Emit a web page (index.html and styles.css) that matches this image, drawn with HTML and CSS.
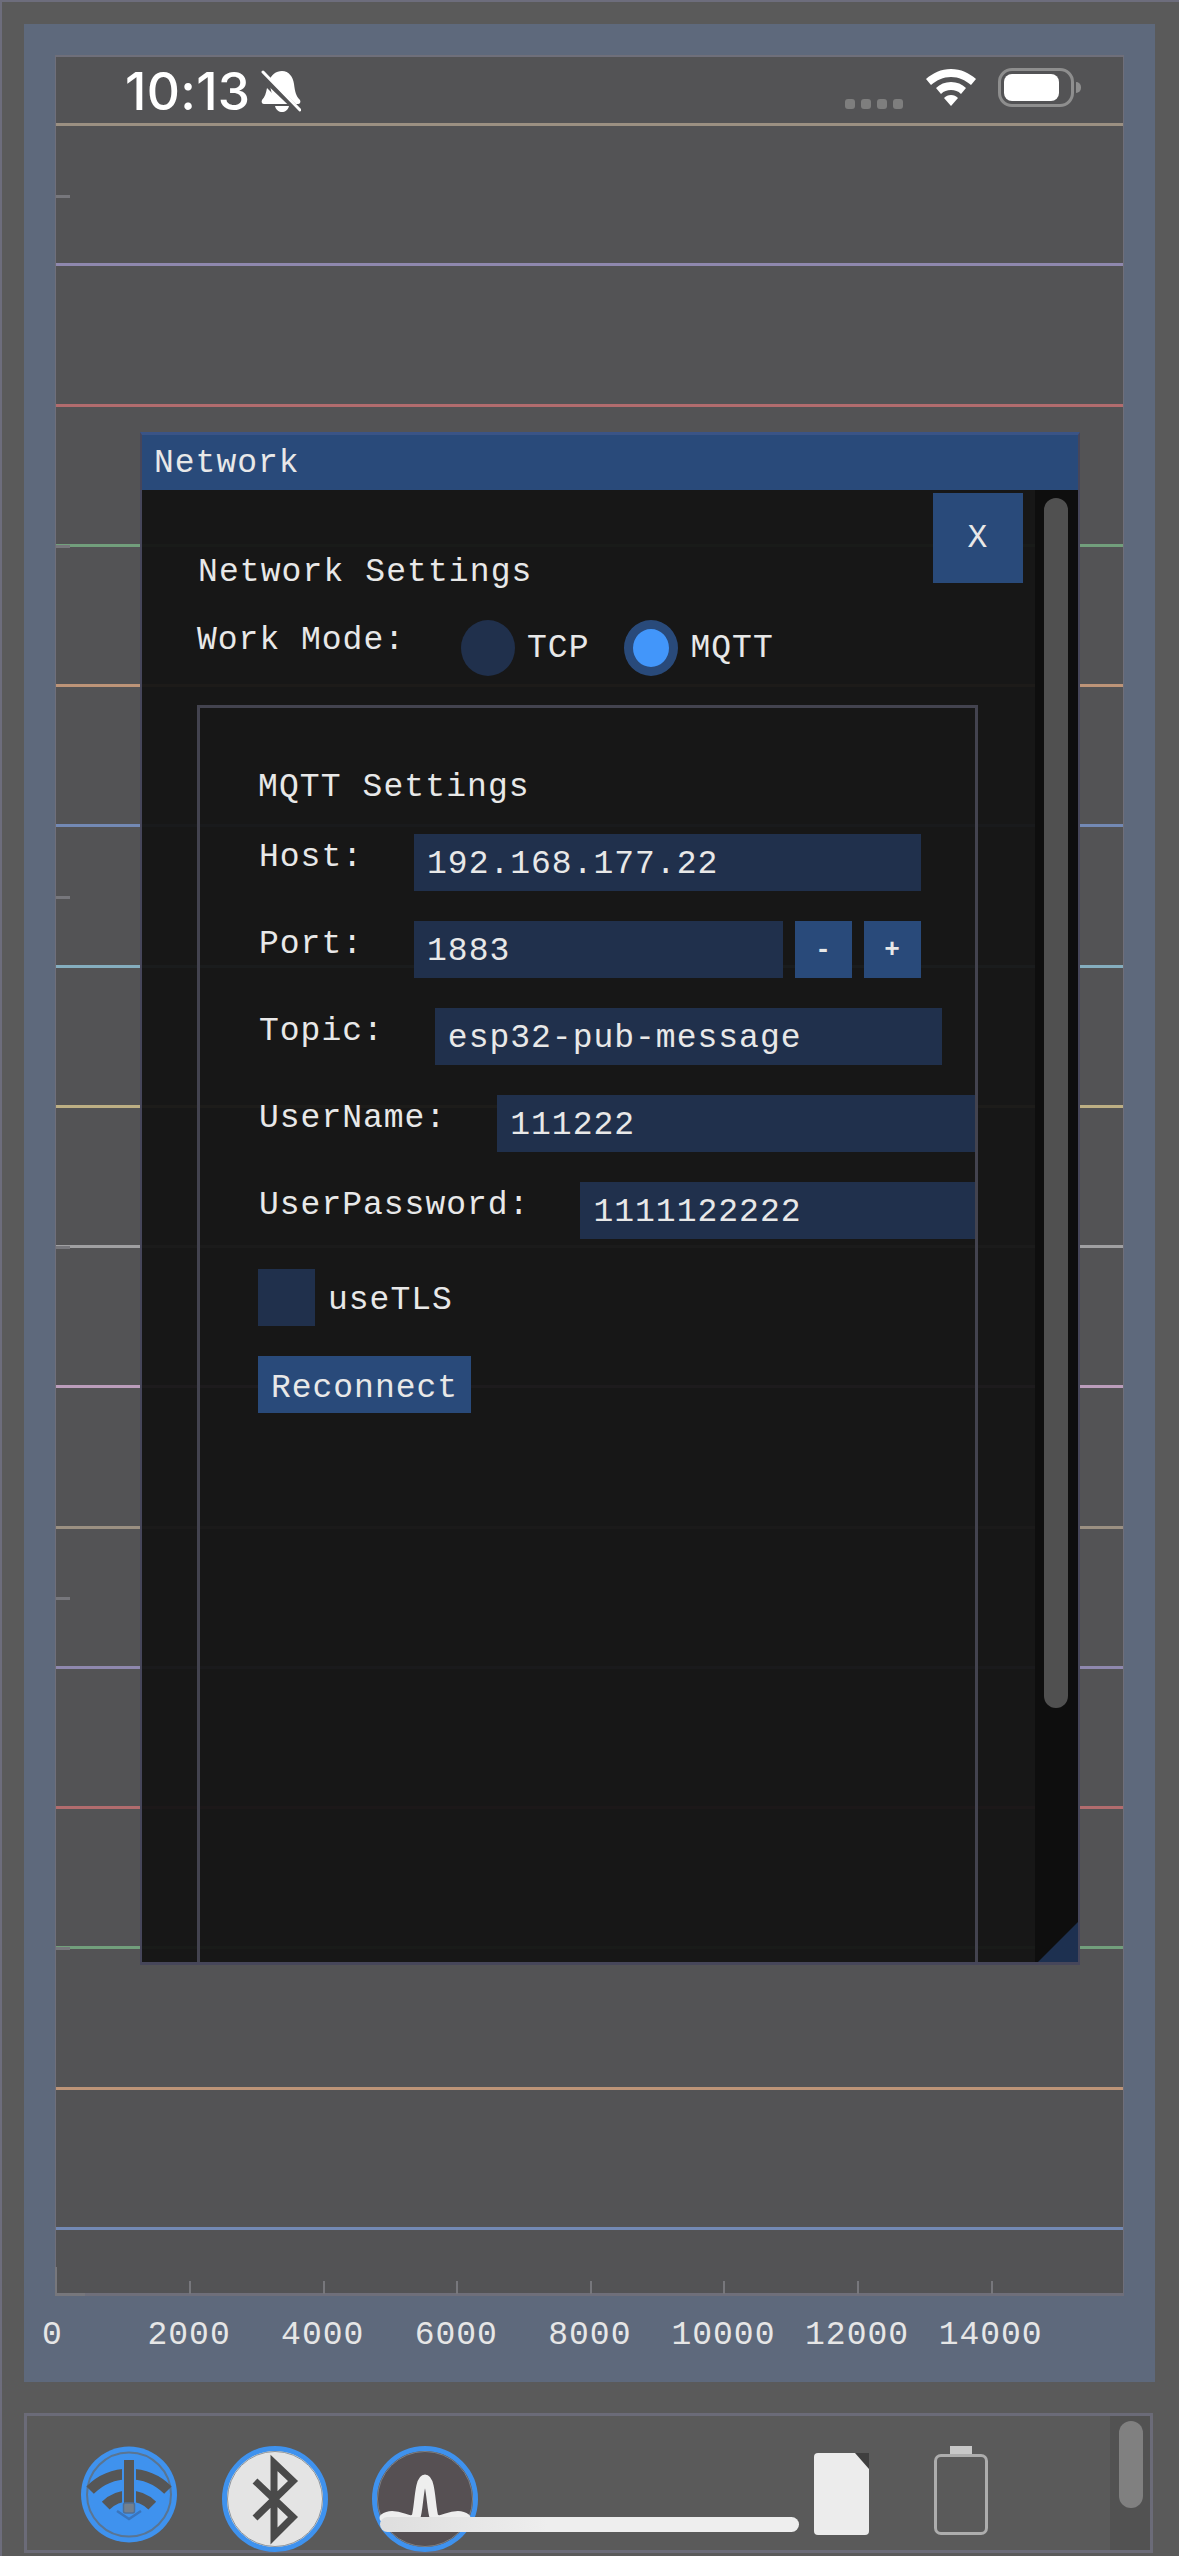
FILE: index.html
```html
<!DOCTYPE html>
<html lang="en">
<head>
  <meta charset="UTF-8">
  <meta name="viewport" content="width=device-width, initial-scale=1.0">
  <title>Network</title>
  <link rel="stylesheet" href="styles.css">
</head>
<body>
  <div class="app">
    <section class="plot-frame">
      <div class="plot">
        <div class="status-bar">
          <div class="status-left">
            <span class="clock">10:13</span>
            <svg class="bell" viewBox="0 0 40 42">
              <path fill="#fff" d="M21 1c7 0 11 6 12 13 1 8 2 12 6 16 1 2 0 4-2 4H13L8 11C10 5 15 1 21 1z"/>
              <path fill="#fff" d="M6 18l16 16H3c-2 0-3-2-2-4 3-3 4-7 5-12z"/>
              <path fill="#fff" d="M14 36h14c-1 4-4 6-7 6s-6-2-7-6z"/>
              <path stroke="#535355" stroke-width="6" d="M-1 4l40 38"/>
              <path stroke="#fff" stroke-width="3" stroke-linecap="round" d="M2 2l37 38"/>
            </svg>
          </div>
          <div class="status-right">
            <div class="signal-dots"><i></i><i></i><i></i><i></i></div>
            <svg class="wifi" viewBox="0 0 50 37">
              <path fill="#fff" d="M25 0c10 0 18 4 25 10l-5 6C39 11 33 8 25 8S11 11 5 16l-5-6C7 4 15 0 25 0z"/>
              <path fill="#fff" d="M25 13c6 0 11 2 15 6l-5 6c-3-3-6-4-10-4s-7 1-10 4l-5-6c4-4 9-6 15-6z"/>
              <path fill="#fff" d="M25 26c3 0 5 1 7 3l-7 8-7-8c2-2 4-3 7-3z"/>
            </svg>
            <div class="battery"><div class="battery-level"></div></div>
            <div class="battery-cap"></div>
          </div>
        </div>

        <div class="series">
          <div class="line c1"></div>
          <div class="line c2"></div>
          <div class="line c3"></div>
          <div class="line c4"></div>
          <div class="line c5"></div>
          <div class="line c6"></div>
          <div class="line c7"></div>
          <div class="line c8"></div>
          <div class="line c9"></div>
          <div class="line c10"></div>
          <div class="line c1"></div>
          <div class="line c2"></div>
          <div class="line c3"></div>
          <div class="line c4"></div>
          <div class="line c5"></div>
          <div class="line c6"></div>
        </div>

        <div class="y-ticks">
          <i></i><i></i><i></i><i></i><i></i><i></i>
        </div>
        <div class="x-ticks">
          <i></i><i></i><i></i><i></i><i></i><i></i><i></i>
        </div>
        <div class="origin"></div>

        <div class="window">
          <div class="window-title">Network</div>
          <div class="window-body">
            <div class="window-content">
              <div class="head-row">
                <h2 class="heading">Network Settings</h2>
                <button class="btn close-btn">X</button>
              </div>
              <div class="mode-row">
                <span class="label mode-label">Work Mode:</span>
                <span class="radio"></span>
                <span class="opt-text">TCP</span>
                <span class="radio checked"></span>
                <span class="opt-text">MQTT</span>
              </div>
              <div class="child">
                <h3 class="heading child-heading">MQTT Settings</h3>
                <div class="field">
                  <label class="label">Host:</label>
                  <input class="input" type="text" value="192.168.177.22">
                </div>
                <div class="field">
                  <label class="label">Port:</label>
                  <input class="input input-port" type="text" value="1883">
                  <button class="btn step-btn">-</button>
                  <button class="btn step-btn">+</button>
                </div>
                <div class="field">
                  <label class="label">Topic:</label>
                  <input class="input" type="text" value="esp32-pub-message">
                </div>
                <div class="field">
                  <label class="label">UserName:</label>
                  <input class="input" type="text" value="111222">
                </div>
                <div class="field">
                  <label class="label">UserPassword:</label>
                  <input class="input" type="text" value="1111122222">
                </div>
                <div class="field check-row">
                  <span class="checkbox"></span>
                  <span class="opt-text">useTLS</span>
                </div>
                <div class="field">
                  <button class="btn reconnect-btn">Reconnect</button>
                </div>
              </div>
            </div>
            <div class="scrollbar"><div class="scroll-grab"></div></div>
          </div>
          <div class="resize-grip"></div>
        </div>
      </div>

      <div class="x-labels">
        <span>0</span>
        <span>2000</span>
        <span>4000</span>
        <span>6000</span>
        <span>8000</span>
        <span>10000</span>
        <span>12000</span>
        <span>14000</span>
      </div>
    </section>

    <section class="tool-panel">
      <svg class="tool-icon icon-wifi" viewBox="0 0 96 97">
        <circle cx="48" cy="48.5" r="48" fill="#3f92ee"/>
        <circle cx="48" cy="48.5" r="42" fill="none" stroke="#5a7592" stroke-width="2"/>
        <path fill="none" stroke="#565656" stroke-width="10.5" d="M9.1 44.1A55 55 0 0 1 86.9 44.1"/>
        <path fill="none" stroke="#565656" stroke-width="11" d="M24.7 59.7A33 33 0 0 1 71.3 59.7"/>
        <path fill="none" stroke="#3a75bc" stroke-width="2.5" d="M36 65l12 8 12-8"/>
        <rect x="42" y="13" width="12" height="45" fill="#565656" stroke="#3f92ee" stroke-width="2"/>
        <rect x="42.5" y="57" width="11" height="10" rx="2" fill="#74808e" stroke="#4f6f96" stroke-width="1.5"/>
      </svg>
      <svg class="tool-icon icon-bt" viewBox="0 0 106 106">
        <circle cx="53" cy="53" r="50.5" fill="#e4e4e4" stroke="#3f92ee" stroke-width="5"/>
        <circle cx="53" cy="53" r="47.5" fill="none" stroke="#8c949c" stroke-width="1"/>
        <path fill="none" stroke="#4a4a4a" stroke-width="7" d="M33 35l38 36-19 19V17l19 18-38 37"/>
      </svg>
      <svg class="tool-icon icon-signal" viewBox="0 0 106 106">
        <circle cx="53" cy="53" r="50.5" fill="#565053" stroke="#3f92ee" stroke-width="5"/>
        <circle cx="53" cy="53" r="47.5" fill="none" stroke="#7d8186" stroke-width="1"/>
        <path fill="none" stroke="#eeeeee" stroke-width="9" stroke-linecap="round" d="M12 72c5-4 12-3 20 0 5 2 9 3 12-1 3-8 3-38 9-38s6 30 9 38c3 4 7 3 12 1 8-3 15-4 20 0"/>
      </svg>
      <svg class="tool-icon icon-sd" viewBox="0 0 55 82">
        <rect width="55" height="82" rx="4" fill="#ececec"/>
        <path fill="#3f3f3f" d="M41 0h14v16z"/>
      </svg>
      <div class="tool-icon icon-cell">
        <div class="cell-cap"></div>
        <div class="cell-body"></div>
      </div>
      <div class="panel-scroll"><div class="panel-grab"></div></div>
    </section>

    <div class="home-bar"></div>
  </div>
</body>
</html>
```

FILE: styles.css
```css
* {
  box-sizing: border-box;
}

html, body {
  margin: 0;
  padding: 0;
}

body {
  background: #5a5a5a;
  font-family: "Liberation Mono", monospace;
  color: #e8e8e8;
}

.app {
  position: relative;
  height: 2556px;
  padding: 22px 24px 3px 22px;
  border-top: 2px solid #6d6d7c;
  border-left: 2px solid #6d6d7c;
  overflow: hidden;
}

.plot-frame {
  height: 2358px;
  padding: 31px 31px 0 31px;
  background: #5e697c;
}

.plot {
  position: relative;
  height: 2241px;
  background: #535355;
  border: 1px solid #6f6f7a;
  border-top-width: 2px;
  border-bottom-width: 3px;
}

/* status bar */
.status-bar {
  display: flex;
  justify-content: space-between;
  height: 66px;
  padding: 9px 42px 0 69px;
}

.status-left {
  display: flex;
  align-items: flex-start;
  gap: 11px;
}

.clock {
  font-family: Inter, sans-serif;
  font-size: 51.5px;
  line-height: 50px;
  font-weight: 500;
  letter-spacing: 0.3px;
  color: #fff;
}

.bell {
  width: 40px;
  height: 42px;
  margin-top: 4px;
}

.status-right {
  display: flex;
  align-items: flex-start;
  padding-top: 3px;
}

.signal-dots {
  display: flex;
  gap: 6px;
  margin: 30px 23px 0 0;
}

.signal-dots i {
  width: 10px;
  height: 10px;
  border-radius: 3px;
  background: #7e7e7e;
}

.wifi {
  width: 50px;
  height: 37px;
}

.battery {
  width: 76px;
  height: 39px;
  margin: -1px 0 0 22px;
  padding: 3px;
  border: 3px solid #8e8e8e;
  border-radius: 14px;
}

.battery-level {
  width: 55px;
  height: 27px;
  background: #fff;
  border-radius: 8px;
}

.battery-cap {
  width: 5px;
  height: 11px;
  margin: 13px 0 0 2px;
  background: #8e8e8e;
  border-radius: 0 5px 5px 0;
}

/* plot lines */
.series {
  display: flex;
  flex-direction: column;
  justify-content: space-between;
  height: 2107px;
}

.line {
  height: 3px;
}

.c1 { background: #9b9082; }
.c2 { background: #8f88ae; }
.c3 { background: #b26c6e; }
.c4 { background: #729f7c; }
.c5 { background: #bd9478; }
.c6 { background: #7389b4; }
.c7 { background: #85aebf; }
.c8 { background: #bdaf84; }
.c9 { background: #a0a0a2; }
.c10 { background: #bb9dbb; }

.y-ticks {
  position: absolute;
  left: 0;
  top: 138px;
  display: flex;
  flex-direction: column;
  gap: 347.4px;
}

.y-ticks i {
  width: 14px;
  height: 3px;
  background: #77777c;
}

.x-ticks {
  position: absolute;
  left: 133px;
  bottom: -1px;
  display: flex;
  gap: 131.6px;
}

.x-ticks i {
  width: 2px;
  height: 13px;
  background: #77777c;
}

.origin {
  position: absolute;
  left: -1px;
  bottom: -3px;
  width: 30px;
  height: 29px;
  border-left: 2px solid #77777c;
  border-bottom: 3px solid #77777c;
}

.x-labels {
  display: grid;
  grid-template-columns: repeat(8, 133.6px);
  justify-items: center;
  margin: 27px 0 0 -66.3px;
  font-size: 33px;
  line-height: 26px;
  letter-spacing: 1px;
  color: #e6e6e6;
}

.x-labels span:first-child {
  margin-right: 6px;
}

/* network window */
.window {
  position: absolute;
  left: 84px;
  top: 375px;
  width: 940px;
  height: 1533px;
  display: flex;
  flex-direction: column;
  border: 3px solid #46465a;
  border-width: 3px 2px;
  border-top-color: #3a5486;
  background: rgba(20, 20, 20, 0.95);
}

.window-title {
  height: 55px;
  padding-left: 12px;
  font-size: 33px;
  line-height: 57px;
  letter-spacing: 1px;
  background: #294a7a;
  flex-shrink: 0;
}

.window-body {
  flex: 1;
  display: flex;
  min-height: 0;
}

.window-content {
  flex: 1;
  min-width: 0;
  padding: 3px 12px 0 55px;
  overflow: hidden;
}

.head-row {
  display: flex;
  justify-content: space-between;
  height: 90px;
}

.heading {
  margin: 60px 0 0 1px;
  font-size: 33px;
  line-height: 40px;
  font-weight: normal;
  letter-spacing: 1.1px;
}

.btn {
  padding: 0;
  border: none;
  font-family: inherit;
  font-size: 33px;
  letter-spacing: 1px;
  color: #e8e8e8;
  background: #294a7a;
}

.close-btn {
  width: 90px;
  height: 90px;
}

.mode-row {
  display: flex;
  margin-top: 37px;
  height: 56px;
}

.label {
  font-size: 33px;
  line-height: 41px;
  letter-spacing: 1px;
  flex-shrink: 0;
  white-space: nowrap;
}

.mode-label {
  margin-right: 56px;
}

.radio {
  width: 54px;
  height: 56px;
  border-radius: 50%;
  background: #20304c;
  flex-shrink: 0;
}

.radio.checked {
  border: 9px solid #294a7a;
  background: #4296fa;
}

.opt-text {
  font-size: 33px;
  line-height: 58px;
  letter-spacing: 1px;
  margin: 0 35px 0 12px;
}

.child {
  height: 1400px;
  margin-top: 29px;
  padding: 60px 0 0 58px;
  width: 781px;
  border: 3px solid #43434f;
  overflow: hidden;
}

.child-heading {
  margin: 0 0 26px;
}

.field {
  display: flex;
  height: 57px;
  margin-bottom: 30px;
}

.field .label {
  margin-right: 51px;
  padding-left: 1px;
  line-height: 48px;
}

.input {
  width: 507px;
  height: 57px;
  padding: 4px 0 0 13px;
  border: none;
  border-radius: 0;
  outline: none;
  flex-shrink: 0;
  font-family: inherit;
  font-size: 33px;
  letter-spacing: 1px;
  color: #e8e8e8;
  background: #20304c;
}

.input-port {
  width: 369px;
  margin-right: 12px;
}

.step-btn {
  width: 57px;
  height: 57px;
  margin-right: 12px;
  font-size: 26px;
  font-weight: bold;
}

.checkbox {
  width: 57px;
  height: 57px;
  background: #20304c;
}

.check-row .opt-text {
  margin-left: 13px;
  line-height: 64px;
}

.reconnect-btn {
  width: 213px;
  height: 57px;
  padding-top: 7px;
}

.scrollbar {
  width: 43px;
  padding: 8px 10px 0 9px;
  background: #0e0e0e;
  flex-shrink: 0;
}

.scroll-grab {
  height: 1210px;
  border-radius: 12px;
  background: #505050;
}

.resize-grip {
  position: absolute;
  right: 0;
  bottom: 0;
  width: 40px;
  height: 40px;
  background: #1d3050;
  clip-path: polygon(100% 0, 100% 100%, 0 100%);
}

/* bottom tool panel */
.tool-panel {
  position: relative;
  display: flex;
  align-items: flex-start;
  height: 140px;
  width: 1129px;
  margin-top: 31px;
  padding: 30px 0 0 54px;
  border: 3px solid #6b6b78;
}

.tool-icon {
  flex-shrink: 0;
}

.icon-wifi {
  width: 96px;
  height: 97px;
}

.icon-bt {
  width: 106px;
  height: 106px;
  margin-left: 45px;
}

.icon-signal {
  width: 106px;
  height: 106px;
  margin-left: 44px;
}

.icon-sd {
  width: 55px;
  height: 82px;
  margin: 7px 0 0 336px;
}

.icon-cell {
  width: 54px;
  margin-left: 65px;
  display: flex;
  flex-direction: column;
  align-items: center;
}

.cell-cap {
  width: 22px;
  height: 8px;
  background: #c8c8c8;
}

.cell-body {
  width: 54px;
  height: 81px;
  border: 3px solid #adadad;
  border-radius: 7px;
}

.panel-scroll {
  position: absolute;
  right: 0;
  top: 0;
  bottom: 0;
  width: 40px;
  padding: 5px 7px 0 9px;
  background: #525252;
}

.panel-grab {
  height: 87px;
  border-radius: 12px;
  background: #808080;
}

.home-bar {
  position: absolute;
  left: 378px;
  top: 2515px;
  width: 419px;
  height: 15px;
  border-radius: 8px;
  background: linear-gradient(90deg, #dedede, #eeeeee 40%);
}
```
